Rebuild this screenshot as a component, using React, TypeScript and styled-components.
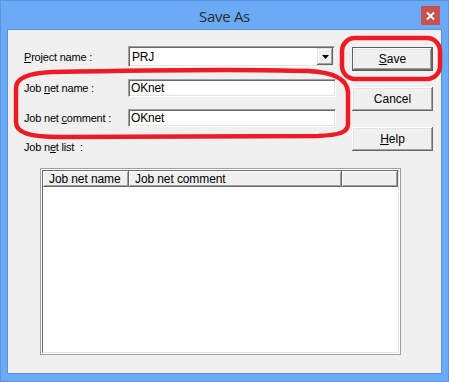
import React from 'react';
import styled, { createGlobalStyle } from 'styled-components';

const Global = createGlobalStyle`
  html, body { margin: 0; padding: 0; background: #6aaaf6; }
  body { width: 449px; height: 382px; overflow: hidden; }
  * { box-sizing: border-box; }
`;

const Page = styled.div`
  position: relative;
  width: 449px;
  height: 382px;
`;

const Window = styled.div`
  width: 449px;
  height: 382px;
  background: #6aaaf6;
  border: 1px solid #5a94dc;
  display: flex;
  flex-direction: column;
  padding: 0 6px 7px 6px;
`;

const TitleBar = styled.div`
  height: 28px;
  display: grid;
  grid-template-columns: 1fr auto 1fr;
  align-items: center;
`;

const Title = styled.div`
  grid-column: 2;
  font-family: "Open Sans", "Noto Sans", sans-serif;
  font-size: 15px;
  letter-spacing: -0.3px;
  color: #2b2b2b;
  padding-top: 1px;
`;

const CloseButton = styled.div`
  grid-column: 3;
  justify-self: end;
  align-self: start;
  margin: 5px 2px 0 0;
  width: 19px;
  height: 19px;
  background: #c75050;
  display: flex;
  align-items: center;
  justify-content: center;
`;

const Client = styled.div`
  flex: 1;
  background: #f0f0f0;
  border: 1px solid #5591dc;
  font-family: "Liberation Sans", Arial, sans-serif;
  font-size: 11px;
  letter-spacing: -0.2px;
  color: #000;
  display: flex;
  flex-direction: column;
`;

const Top = styled.div`
  display: flex;
  padding: 16px 0 0 16px;
`;

const Form = styled.div`
  display: flex;
  flex-direction: column;
  width: 312px;
`;

const Row = styled.div<{ $h: number; $mt: number }>`
  display: flex;
  align-items: center;
  height: ${(p) => p.$h}px;
  margin-top: ${(p) => p.$mt}px;
`;

const Label = styled.div`
  width: 104px;
  flex: none;
  white-space: nowrap;
`;

const U = styled.span`
  text-decoration: underline;
  text-underline-offset: 1px;
`;

const sunken = `
  border: 1px solid;
  border-color: #a0a0a0 #ffffff #ffffff #a0a0a0;
  box-shadow: inset 1px 1px #696969, inset -1px -1px #e3e3e3;
  background: #fff;
`;

const Combo = styled.div`
  ${sunken}
  width: 207px;
  height: 21px;
  display: flex;
  align-items: stretch;
  padding: 1px;
`;

const ComboText = styled.div`
  flex: 1;
  display: flex;
  align-items: center;
  padding-left: 2px;
  font-size: 12px;
`;

const DropButton = styled.div`
  width: 16px;
  background: #f0f0f0;
  box-shadow: inset -1px -1px #696969, inset 1px 1px #e3e3e3, inset -2px -2px #a0a0a0, inset 2px 2px #fff;
  display: flex;
  align-items: center;
  justify-content: center;
`;

const TextBox = styled.div`
  ${sunken}
  width: 208px;
  height: 18px;
  display: flex;
  align-items: center;
  padding: 0 2px;
  font-size: 12px;
`;

const Buttons = styled.div`
  display: flex;
  flex-direction: column;
  gap: 16px;
  margin-left: 16px;
  padding-top: 1px;
`;

const Button = styled.div<{ $default?: boolean }>`
  width: 81px;
  height: 24px;
  display: flex;
  align-items: center;
  justify-content: center;
  background: #f0f0f0;
  font-size: 12px;
  letter-spacing: 0;
  border: ${(p) => (p.$default ? '1px solid #5e5e5e' : 'none')};
  box-shadow: inset -1px -1px #696969, inset 1px 1px #ffffff, inset -2px -2px #a0a0a0, inset 2px 2px #e3e3e3;
`;

const ListFrame = styled.div`
  margin: 15px 0 0 32px;
  width: 361px;
  height: 187px;
  border: 1px solid #a0a0a0;
  padding: 1px;
  background: #fff;
  display: flex;
`;

const ListView = styled.div`
  flex: 1;
  border: 1px solid;
  border-color: #696969 #e3e3e3 #e3e3e3 #696969;
  background: #fff;
  display: flex;
  flex-direction: column;
`;

const Header = styled.div`
  display: flex;
  height: 16px;
  flex: none;
`;

const HeaderCell = styled.div<{ $w?: number }>`
  ${(p) => (p.$w ? `width: ${p.$w}px; flex: none;` : 'flex: 1;')}
  height: 16px;
  background: #f0f0f0;
  box-shadow: inset -1px -1px #696969, inset 1px 1px #ffffff, inset -2px -2px #a0a0a0;
  display: flex;
  align-items: center;
  padding-left: 6px;
  font-size: 12px;
  letter-spacing: -0.1px;
  white-space: nowrap;
`;

const Annotation = styled.svg`
  position: absolute;
  top: 0;
  left: 0;
  pointer-events: none;
`;

export default function App() {
  return (
    <Page>
      <Global />
      <Window>
        <TitleBar>
          <Title>Save As</Title>
          <CloseButton>
            <svg width="9" height="8" viewBox="0 0 9 8">
              <path d="M1 0.5 L8 7.5 M8 0.5 L1 7.5" stroke="#fff" strokeWidth="2" />
            </svg>
          </CloseButton>
        </TitleBar>
        <Client>
          <Top>
            <Form>
              <Row $h={21} $mt={0}>
                <Label>
                  <U>P</U>roject name :
                </Label>
                <Combo>
                  <ComboText>PRJ</ComboText>
                  <DropButton>
                    <svg width="7" height="4" viewBox="0 0 7 4">
                      <path d="M0 0 H7 L3.5 4 Z" fill="#000" />
                    </svg>
                  </DropButton>
                </Combo>
              </Row>
              <Row $h={18} $mt={12}>
                <Label>
                  Job <U>n</U>et name :
                </Label>
                <TextBox>OKnet</TextBox>
              </Row>
              <Row $h={18} $mt={12}>
                <Label>
                  Job net <U>c</U>omment :
                </Label>
                <TextBox>OKnet</TextBox>
              </Row>
              <Row $h={13} $mt={13}>
                <Label>
                  Job n<U>e</U>t list &nbsp;:
                </Label>
              </Row>
            </Form>
            <Buttons>
              <Button $default>
                <span>
                  <U>S</U>ave
                </span>
              </Button>
              <Button>Cancel</Button>
              <Button>
                <span>
                  <U>H</U>elp
                </span>
              </Button>
            </Buttons>
          </Top>
          <ListFrame>
            <ListView>
              <Header>
                <HeaderCell $w={86}>Job net name</HeaderCell>
                <HeaderCell $w={213}>Job net comment</HeaderCell>
                <HeaderCell />
              </Header>
            </ListView>
          </ListFrame>
        </Client>
      </Window>
      <Annotation width="449" height="382" viewBox="0 0 449 382">
        <path
          d="M52 72 C150 70 250 69 308 71 C330 72 347 78 348 92 L348 124 C348 133 338 135 318 136 L60 137 C30 137 16 133 16 122 L16 88 C16 78 28 73 52 72 Z"
          fill="none"
          stroke="#ed1c24"
          strokeWidth="4.5"
        />
        <rect x="342" y="38" width="98" height="41" rx="13" fill="none" stroke="#ed1c24" strokeWidth="4.5" />
      </Annotation>
    </Page>
  );
}
